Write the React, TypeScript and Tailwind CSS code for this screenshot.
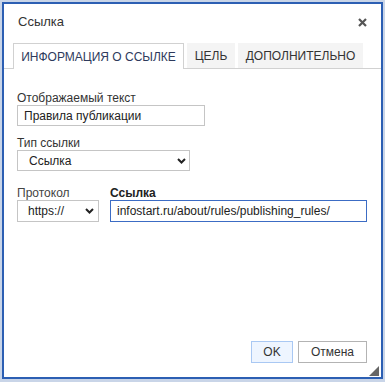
import React from "react";

const Chevron = () => (
  <svg width="9" height="6" viewBox="0 0 9 6" className="shrink-0">
    <path d="M1 1 L4.5 4.5 L8 1" fill="none" stroke="#222" strokeWidth="2" />
  </svg>
);

const tabs = [
  { text: "ИНФОРМАЦИЯ О ССЫЛКЕ", w: "w-[171px]", active: true },
  { text: "ЦЕЛЬ", w: "w-[48px]", active: false },
  { text: "ДОПОЛНИТЕЛЬНО", w: "w-[125px]", active: false },
];

export default function App() {
  return (
    <div
      className="w-[385px] h-[382px] bg-[#c9d5e8] pt-[2px] pl-[2px] text-[12px] text-[#333]"
      style={{ fontFamily: '"Liberation Sans", Arial, sans-serif' }}
    >
      <div className="w-[381px] h-[377px] border-2 border-[#2c5fb3] bg-white flex flex-col relative">
        {/* Header */}
        <div className="h-[39px] flex justify-between">
          <div className="pl-[14px] pt-[10px] text-[13px] leading-[15px] text-[#333]">Ссылка</div>
          <button className="mr-[14px] mt-[14px] h-[9px] w-[9px]">
            <svg width="9" height="9" viewBox="0 0 9 9">
              <path d="M1 1 L8 8 M8 1 L1 8" stroke="#555" strokeWidth="2.2" />
            </svg>
          </button>
        </div>

        {/* Tabs */}
        <div className="h-[26px] border-b border-[#d1d1d1] pl-[9px] flex items-end gap-[3px]">
          {tabs.map((tab) => (
            <div
              key={tab.text}
              className={`${tab.w} flex items-center justify-center leading-[14px] ${
                tab.active
                  ? "h-[26px] -mb-px bg-white border border-b-0 border-[#d1d1d1] text-[#2e3a5c]"
                  : "h-[25px] bg-[#f4f4f4] text-[#333]"
              }`}
            >
              {tab.text}
            </div>
          ))}
        </div>

        {/* Form */}
        <div className="pl-[13px] pt-[25px] flex flex-col">
          <div className="h-[12px] leading-[9px]">Отображаемый текст</div>
          <div className="-mt-px w-[188px] h-[21px] border border-[#c5c5c5] flex items-center pl-[6px] text-[#222]">
            Правила публикации
          </div>

          <div className="mt-[13px] h-[12px] leading-[9px]">Тип ссылки</div>
          <div className="-mt-px w-[173px] h-[21px] border border-[#c5c5c5] flex items-center justify-between pl-[11px] pr-[3px] text-[#222]">
            <span>Ссылка</span>
            <Chevron />
          </div>

          <div className="mt-[18px] flex gap-[11px]">
            <div className="flex flex-col">
              <div className="h-[12px] leading-[9px] text-[#444]">Протокол</div>
              <div className="-mt-px w-[82px] h-[22px] border border-[#c5c5c5] flex items-center justify-between pl-[10px] pr-[4px] text-[#222]">
                <span>https://</span>
                <Chevron />
              </div>
            </div>
            <div className="flex flex-col">
              <div className="h-[12px] leading-[9px] font-bold text-[#222]">Ссылка</div>
              <div className="-mt-px w-[257px] h-[22px] border border-[#3c6cc4] flex items-center pl-[6px] text-[#222]">
                infostart.ru/about/rules/publishing_rules/
              </div>
            </div>
          </div>
        </div>

        {/* Footer */}
        <div className="mt-auto flex justify-end gap-[5px] pr-[14px] pb-[14px]">
          <button className="w-[42px] h-[22px] border border-[#a9c8f3] bg-[#eef5ff] text-[#333] leading-[14px]">OK</button>
          <button className="w-[69px] h-[22px] border border-[#b3b3b3] bg-white text-[#333] leading-[14px]">Отмена</button>
        </div>

        {/* Resize grip */}
        <svg width="10" height="10" viewBox="0 0 10 10" className="absolute right-[2px] bottom-[1px]">
          <polygon points="10,0 10,10 0,10" fill="#666" />
        </svg>
      </div>
    </div>
  );
}
